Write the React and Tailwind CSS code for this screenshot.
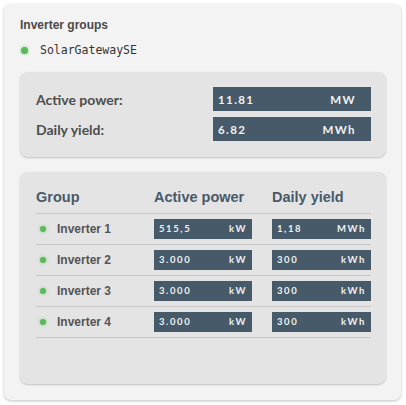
const groups = [
  { name: 'Inverter 1', power: '515,5', powerUnit: 'kW', yieldVal: '1,18', yieldUnit: 'MWh' },
  { name: 'Inverter 2', power: '3.000', powerUnit: 'kW', yieldVal: '300', yieldUnit: 'kWh' },
  { name: 'Inverter 3', power: '3.000', powerUnit: 'kW', yieldVal: '300', yieldUnit: 'kWh' },
  { name: 'Inverter 4', power: '3.000', powerUnit: 'kW', yieldVal: '300', yieldUnit: 'kWh' },
];

const valueFont = { fontFamily: 'Lato, "Open Sans", sans-serif' };

function ValueBox({ value, unit, big }) {
  return (
    <div
      style={valueFont}
      className={
        big
          ? 'flex h-[24px] w-[158px] items-center justify-between bg-[#465a6a] pl-[5px] pr-[15px] text-[11.5px] font-bold tracking-[1.4px] text-[#f2f2f2]'
          : 'flex h-[20px] items-center justify-between bg-[#465a6a] px-[5px] text-[9.5px] font-bold tracking-[1.6px] text-[#f2f2f2]'
      }
    >
      <span>{value}</span>
      <span>{unit}</span>
    </div>
  );
}

function Dot({ small }) {
  return (
    <span
      className={
        small
          ? 'inline-block h-[6px] w-[6px] rounded-full bg-[#5cb85c] shadow-[0_0_3px_#7ccf7c]'
          : 'inline-block h-[7px] w-[7px] rounded-full bg-[#5cb85c] shadow-[0_0_3px_#7ccf7c]'
      }
    />
  );
}

export default function App() {
  return (
    <div className="h-[405px] w-[406px] bg-white p-[4px]" style={{ fontFamily: '"Liberation Sans", Arial, sans-serif' }}>
      <div className="flex h-[396px] w-[397px] flex-col rounded-[7px] bg-[#f3f3f3] px-[16px] pt-[13px] shadow-[0_1px_3px_rgba(0,0,0,0.25)]">
        <div className="text-[12px] font-bold leading-[16px] text-[#4a4a4a]">Inverter groups</div>
        <div className="mt-[9px] flex items-center gap-[12px] pl-[1px]">
          <Dot />
          <span className="text-[11.5px] text-[#333]" style={{ fontFamily: '"DejaVu Sans Mono", monospace' }}>SolarGatewaySE</span>
        </div>

        <div className="mt-[13px] flex w-[366px] flex-col gap-[6px] rounded-[8px] bg-[#e4e4e4] pb-[16px] pl-[16px] pr-[15px] pt-[15px] shadow-[0_1px_2px_rgba(0,0,0,0.2)]">
          <div className="flex items-center justify-between">
            <span style={valueFont} className="text-[14px] font-bold text-[#4d4d4d]">Active power:</span>
            <ValueBox big value="11.81" unit="MW" />
          </div>
          <div className="flex items-center justify-between">
            <span style={valueFont} className="text-[14px] font-bold text-[#4d4d4d]">Daily yield:</span>
            <ValueBox big value="6.82" unit="MWh" />
          </div>
        </div>

        <div className="mt-[15px] h-[212px] w-[366px] rounded-[8px] bg-[#e4e4e4] pl-[16px] pr-[15px] pt-[13px] shadow-[0_1px_2px_rgba(0,0,0,0.2)]">
          <div className="grid h-[29px] grid-cols-[98px_98px_99px] items-center gap-x-[20px] border-b border-[#c8c8c8] pb-[2px] text-[14.5px] font-bold text-[#485a6a]">
            <span>Group</span>
            <span>Active power</span>
            <span>Daily yield</span>
          </div>
          {groups.map((g) => (
            <div key={g.name} className="grid h-[31px] grid-cols-[98px_98px_99px] items-center gap-x-[20px] border-b border-[#c8c8c8] pb-[1px]">
              <div className="flex items-center gap-[11px] pl-[4px]">
                <Dot small />
                <span className="whitespace-nowrap text-[12px] font-bold text-[#555]">{g.name}</span>
              </div>
              <ValueBox value={g.power} unit={g.powerUnit} />
              <ValueBox value={g.yieldVal} unit={g.yieldUnit} />
            </div>
          ))}
        </div>
      </div>
    </div>
  );
}
